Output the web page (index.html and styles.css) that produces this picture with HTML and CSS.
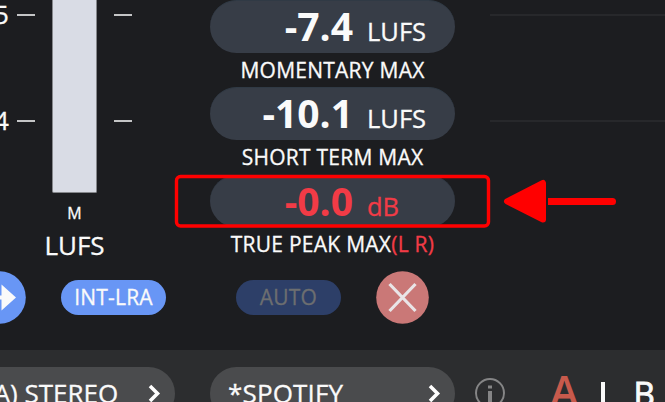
FILE: index.html
```html
<!DOCTYPE html>
<html lang="en">
<head>
<meta charset="utf-8">
<title>Loudness meter</title>
<link rel="stylesheet" href="styles.css">
</head>
<body>
<main class="panel">
  <section class="meter">
    <div class="scale">
      <div class="numbers"><span>5</span><span>4</span></div>
      <div class="ticks"><i></i><i></i></div>
      <div class="bar"></div>
      <div class="ticks"><i></i><i></i></div>
    </div>
    <div class="channel">M</div>
    <div class="unit-name">LUFS</div>
  </section>
  <section class="stats">
    <div class="reading"><b>-7.4</b><span>LUFS</span></div>
    <div class="label momentary">MOMENTARY MAX</div>
    <div class="reading"><b>-10.1</b><span>LUFS</span></div>
    <div class="label short">SHORT TERM MAX</div>
    <div class="reading over"><b>-0.0</b><span>dB</span></div>
    <div class="label peak">TRUE PEAK MAX<span>(L R)</span></div>
  </section>
  <section class="graph"><i></i><i></i></section>
</main>
<div class="controls">
  <svg class="round next" width="53" height="53" viewBox="0 0 53 53"><circle cx="26.5" cy="26.5" r="26.3" fill="#6896f5"/><path d="M12 24.5h16.500V13.500L43 26.500 28.500 39.500V28.500H12z" fill="#fafafa"/></svg>
  <button class="chip lra">INT-LRA</button>
  <button class="chip auto">AUTO</button>
  <svg class="round" width="53" height="53" viewBox="0 0 53 53"><circle cx="26.500" cy="26.500" r="26.300" fill="#ca7877"/><path d="M13.500 13l26 27M39.500 13L13.500 40" stroke="#e9e5e7" stroke-width="3.200"/></svg>
</div>
<footer class="footer">
  <div class="select source"><span>(A) STEREO</span><svg width="14" height="20" viewBox="0 0 14 20"><path d="M2 2l7.500 7.500L2 17" fill="none" stroke="#fff" stroke-width="3.600"/></svg></div>
  <div class="select preset"><span>*SPOTIFY</span><svg width="14" height="20" viewBox="0 0 14 20"><path d="M2 2l7.500 7.500L2 17" fill="none" stroke="#fff" stroke-width="3.600"/></svg></div>
  <svg class="info" width="32" height="32" viewBox="0 0 32 32"><circle cx="16" cy="16" r="14" fill="none" stroke="#858586" stroke-width="2"/><path d="M14 8.500h4v3h-4zM14 14H18V26h-4z" fill="#858586"/></svg>
  <div class="ab"><span class="a">A</span><i></i><span class="b">B</span></div>
</footer>
<svg class="callout" width="665" height="402" viewBox="0 0 665 402">
  <rect x="176.500" y="176.500" width="312" height="49.500" rx="4" fill="none" stroke="#f00" stroke-width="3.400"/>
  <path d="M507 201.300L543 183V219.500z" fill="#f00" stroke="#f00" stroke-width="6" stroke-linejoin="round"/>
  <path d="M548 198H612.500a3.500 3.500 0 0 1 0 7H548z" fill="#f00"/>
</svg>
</body>
</html>
```
FILE: styles.css
```css
* { box-sizing: border-box; }
body {
  margin: 0;
  width: 665px;
  height: 402px;
  overflow: hidden;
  background: #1c1d20;
  color: #fafafa;
  font-family: "Open Sans", "Noto Sans", sans-serif;
  font-weight: 400;
  -webkit-text-stroke: 0.3px;
}
.panel { display: flex; height: 271px; }
.meter { width: 210px; }
.scale { display: flex; height: 193px; }
.numbers { width: 17px; display: flex; flex-direction: column; align-items: flex-start; margin-left: -6px; font-size: 26px; line-height: 28px; }
.numbers span { flex: none; height: 106px; }
.ticks { width: 18px; padding-top: 13.500px; margin-left: 6px; }
.ticks i { display: block; height: 2.500px; margin-bottom: 103.500px; background: #c4c5c6; }
.bar { width: 45px; margin: 0 11px 0 17px; background: #d9dce5; border: 1px solid #85878b; border-top: 0; border-radius: 0 0 2px 2px; }
.channel { width: 149px; text-align: center; font-size: 16px; line-height: 40px; }
.unit-name { width: 149px; text-align: center; font-size: 26px; line-height: 25px; }
.stats { width: 245px; }
.reading {
  display: grid;
  grid-template-columns: 143px 1fr;
  column-gap: 14px;
  align-items: baseline;
  height: 52.500px;
  line-height: 52px;
  border-radius: 27px;
  background: #373d47;
  border-top: 1px solid #303a45;
  font-size: 25.500px;
}
.reading b { font-size: 39px; font-weight: 700; text-align: right; line-height: 50px; -webkit-text-stroke: 0; }
.label { height: 34.800px; line-height: 35px; font-size: 21px; letter-spacing: 0.250px; text-align: center; white-space: nowrap; }
.over, .peak span { color: #f23b46; }
.graph { width: 175px; margin-left: 35px; padding-top: 14px; }
.graph i { display: block; height: 2px; margin-bottom: 104px; background: #27282b; }
.controls { display: flex; align-items: center; height: 79px; padding-bottom: 26px; }
.round { flex: none; }
.next { margin-left: -27px; margin-right: 35px; }
.chip { width: 105px; height: 35px; padding: 0; border: 0; border-radius: 18px; font: 400 21px/35px "Open Sans", sans-serif; letter-spacing: 0.200px; -webkit-text-stroke: 0.3px; color: #fafafa; background: #6896f5; }
.auto { margin: 0 35px 0 70px; background: #2d3f68; color: #6c6e70; }
.footer { display: flex; height: 52px; background: #2c2d2f; overflow: hidden; padding-top: 17px; }
.select { display: flex; flex: none; justify-content: space-between; height: 53px; padding: 0 13px 0 18px; border-radius: 27px; background: #4a4b4d; font-size: 26px; line-height: 53px; }
.select svg { margin-top: 17px; }
.source { width: 235px; margin-left: -60px; padding-left: 46px; }
.preset { width: 245px; margin-left: 35px; letter-spacing: 0.150px; }
.info { flex: none; margin: 10px 0 0 19px; }
.ab { display: flex; margin-left: 44px; line-height: 53px; }
.a { font-size: 43px; line-height: 48px; font-weight: 600; color: #c85a4c; -webkit-text-stroke: 0; }
.ab i { width: 4px; height: 30px; margin: 15px 28px 0 23px; background: #fafafa; }
.b { font-size: 33px; -webkit-text-stroke: 0.9px; }
.callout { position: absolute; top: 0; left: 0; }
```
